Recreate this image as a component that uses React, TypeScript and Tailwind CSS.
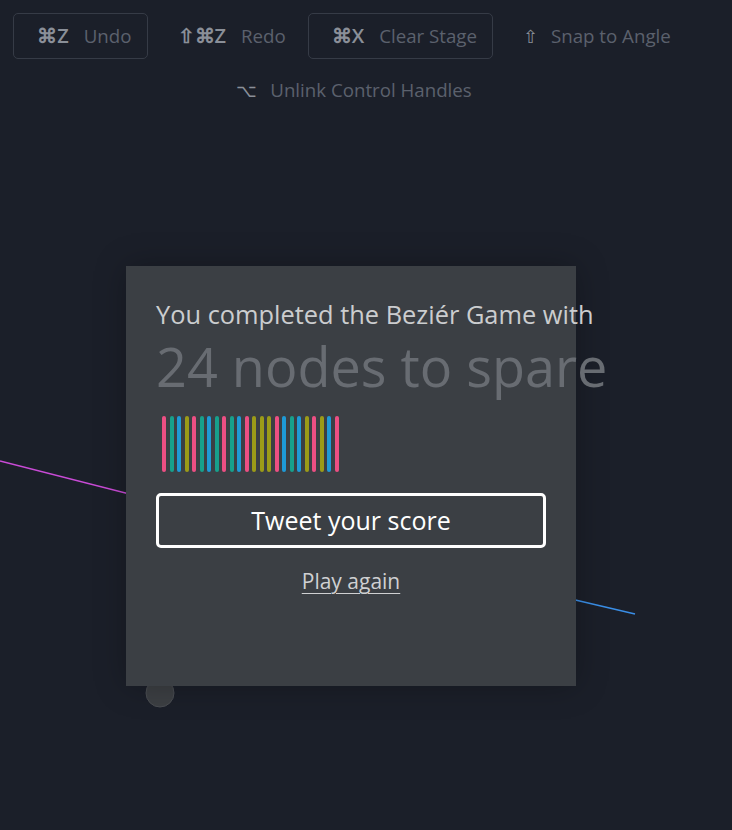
import React from "react";

const bars = [
  "p","t","b","o","p","t","b","t","p","t","b","p","o","o","o","p","b","t","b","o","p","o","b","p",
];
const colorMap: Record<string, string> = {
  p: "#ec4f83",
  t: "#17a08c",
  b: "#1e9ad6",
  o: "#9b9b18",
};

function ToolItem({ keys, label, boxed, small }: { keys: string; label: string; boxed?: boolean; small?: boolean }) {
  return (
    <div
      className={
        "flex items-center h-[46px] pl-[23px] pr-[15px] mx-[3px] my-[4px] rounded-[5px] border " +
        (boxed ? "border-[#363b46]" : "border-transparent")
      }
    >
      <span
        className={
          small
            ? "text-[18px] text-[#8a8f98] mr-[13px]"
            : "text-[20px] text-[#8a8f98] font-semibold mr-[15px]"
        }
      >
        {keys}
      </span>
      <span className="text-[18.7px] text-[#5b616d]">{label}</span>
    </div>
  );
}

export default function App() {
  return (
    <div
      className="relative w-[732px] h-[830px] overflow-hidden bg-[#1b1f29]"
      style={{ fontFamily: "'Open Sans', 'Noto Sans', sans-serif" }}
    >
      <svg className="absolute inset-0" width="732" height="830">
        <line x1="0" y1="461" x2="200" y2="512" stroke="#c94bd6" strokeWidth="1.5" />
        <line x1="520" y1="587" x2="635" y2="614" stroke="#3a8ee6" strokeWidth="1.5" />
        <circle cx="160" cy="693" r="14" fill="#3c3f43" stroke="#4a4d52" strokeWidth="1" />
      </svg>

      <div className="relative w-[700px] pt-[9px] flex flex-wrap justify-center">
        <ToolItem keys="⌘Z" label="Undo" boxed />
        <ToolItem keys="⇧⌘Z" label="Redo" />
        <ToolItem keys="⌘X" label="Clear Stage" boxed />
        <ToolItem keys="⇧" label="Snap to Angle" small />
        <ToolItem keys="⌥" label="Unlink Control Handles" small />
      </div>

      <div className="absolute left-[126px] top-[266px] w-[450px] h-[420px] bg-[#3b3f44] px-[30px] pt-[30px] shadow-[0_0_30px_rgba(0,0,0,0.25)]">
        <div className="text-[25.4px] leading-[36px] text-[#cbcdcf] whitespace-nowrap">
          You completed the Beziér Game with
        </div>
        <div className="mt-[2px] text-[54px] leading-[64px] text-[#686c72] whitespace-nowrap">
          24 nodes to spare
        </div>
        <div className="flex gap-[3.5px] mt-[18px] ml-[6px] h-[56px]">
          {bars.map((c, i) => (
            <div
              key={i}
              className="w-[4px] h-full rounded-full"
              style={{ backgroundColor: colorMap[c] }}
            />
          ))}
        </div>
        <button className="mt-[21px] w-[390px] h-[55px] border-[3px] border-white rounded-[5px] text-white text-[25px] flex items-center justify-center">
          Tweet your score
        </button>
        <div className="mt-[19px] leading-[28px] text-center text-[21px] text-[#cfd0d2] underline underline-offset-[4px] decoration-1">
          Play again
        </div>
      </div>
    </div>
  );
}
